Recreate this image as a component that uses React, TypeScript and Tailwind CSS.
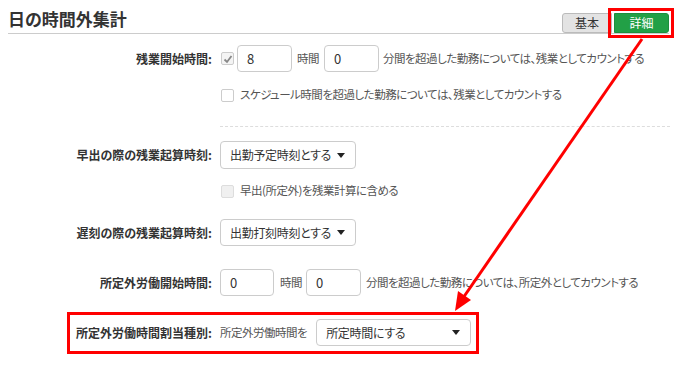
import React from "react";

const font = "font-['Noto_Sans_CJK_JP','Noto_Sans',sans-serif] [font-feature-settings:'palt']";
const body = "text-[11.5px] tracking-[-0.5px] text-[#555] whitespace-nowrap";

function Label({ children }: { children: React.ReactNode }) {
  return (
    <div className="w-[213px] shrink-0 text-right text-[12px] font-bold text-[#333] pr-[1px] whitespace-nowrap">
      {children}
    </div>
  );
}

function TextBox({ value, w = "w-[55px]" }: { value: string; w?: string }) {
  return (
    <div className={`${w} h-[27px] shrink-0 border border-[#ccc] rounded-[4px] bg-white flex items-center pl-[9px] text-[13px] tracking-normal text-[#333]`}>
      {value}
    </div>
  );
}

function Select({ value, w }: { value: string; w: string }) {
  return (
    <div className={`${w} shrink-0 border border-[#ccc] rounded-[4px] bg-white flex items-center justify-between pl-[9px] pr-[10px] text-[12px] tracking-[-0.3px] text-[#333] whitespace-nowrap`}>
      <span>{value}</span>
      <svg width="8" height="5" viewBox="0 0 8 5" className="shrink-0">
        <polygon points="0,0 8,0 4,5" fill="#222" />
      </svg>
    </div>
  );
}

function Check({ checked = false, disabled = false }: { checked?: boolean; disabled?: boolean }) {
  return (
    <div
      className={`w-[13px] h-[13px] shrink-0 border rounded-[2px] flex items-center justify-center ${
        disabled ? "border-[#ddd] bg-[#f0f0f0]" : checked ? "border-[#ccc] bg-[#f4f4f4]" : "border-[#ccc] bg-white"
      }`}
    >
      {checked && (
        <svg width="10" height="10" viewBox="0 0 10 10">
          <path d="M1.5 5.5 L4 8 L8.5 2" stroke="#888" strokeWidth="1.8" fill="none" />
        </svg>
      )}
    </div>
  );
}

export default function App() {
  return (
    <div className={`relative w-[685px] h-[365px] bg-white overflow-hidden ${font}`}>
      {/* header */}
      <div className="ml-2 w-[661px] h-[34px] border-b border-[#ccc] flex items-end justify-between">
        <div className="text-[17px] font-bold text-[#333] leading-none pb-[6px]">日の時間外集計</div>
        <div className="flex">
          <div className="w-[50px] h-[20px] bg-[#e3e3e3] border border-[#bbb] rounded-l-[3px] text-[12px] text-[#333] flex items-center justify-center">
            基本
          </div>
          <div className="w-[55px] h-[20px] ml-[2px] bg-[#22a046] border border-[#1c8f3d] rounded-r-[3px] text-[12px] text-white flex items-center justify-center">
            詳細
          </div>
        </div>
      </div>

      {/* row 1 */}
      <div className="mt-[11px] flex items-center h-[27px]">
        <Label>残業開始時間:</Label>
        <div className={`ml-[8px] flex items-center ${body}`}>
          <Check checked />
          <div className="ml-[3px]">
            <TextBox value="8" />
          </div>
          <span className="ml-[5px]">時間</span>
          <div className="ml-[5px]">
            <TextBox value="0" />
          </div>
          <span className="ml-[4px]">分間を超過した勤務については、残業としてカウントする</span>
        </div>
      </div>

      {/* row 2 */}
      <div className={`mt-[13px] h-[20px] flex items-center pl-[221px] ${body}`}>
        <Check />
        <span className="ml-[6px]">スケジュール時間を超過した勤務については、残業としてカウントする</span>
      </div>

      <div className="mt-[21px] ml-[220px] w-[450px] border-t border-dashed border-[#ddd]" />

      {/* row 3 */}
      <div className="mt-[14px] flex items-center h-[28px]">
        <Label>早出の際の残業起算時刻:</Label>
        <div className="ml-[7px]">
          <Select value="出勤予定時刻とする" w="w-[136px] h-[28px]" />
        </div>
      </div>

      {/* row 4 */}
      <div className={`mt-[12px] h-[20px] flex items-center pl-[221px] ${body}`}>
        <Check disabled />
        <span className="ml-[6px]">早出(所定外)を残業計算に含める</span>
      </div>

      {/* row 5 */}
      <div className="mt-[18px] flex items-center h-[27px]">
        <Label>遅刻の際の残業起算時刻:</Label>
        <div className="ml-[7px]">
          <Select value="出勤打刻時刻とする" w="w-[136px] h-[27px]" />
        </div>
      </div>

      {/* row 6 */}
      <div className="mt-[23px] flex items-center h-[27px]">
        <Label>所定外労働開始時間:</Label>
        <div className={`ml-[7px] flex items-center ${body}`}>
          <TextBox value="0" w="w-[54px]" />
          <span className="ml-[6px]">時間</span>
          <div className="ml-[4px]">
            <TextBox value="0" />
          </div>
          <span className="ml-[5px]">分間を超過した勤務については、所定外としてカウントする</span>
        </div>
      </div>

      {/* row 7 */}
      <div className="relative mt-[23px] flex items-center h-[27px]">
        <Label>所定外労働時間割当種別:</Label>
        <div className={`ml-[7px] flex items-center ${body}`}>
          <span>所定外労働時間を</span>
          <div className="ml-[9px]">
            <Select value="所定時間にする" w="w-[155px] h-[27px]" />
          </div>
        </div>
        <div className="absolute left-[67px] top-[-7px] w-[412px] h-[42px] border-[3px] border-[#ff0000]" />
      </div>

      {/* annotation: box around 詳細 and arrow */}
      <div className="absolute left-[608px] top-[8px] w-[66px] h-[30px] border-[3px] border-[#ff0000]" />
      <svg className="absolute left-0 top-0 pointer-events-none" width="685" height="365">
        <line x1="642" y1="39" x2="463" y2="298" stroke="#ff0000" strokeWidth="3" />
        <polygon points="455,311 471,300 458,291" fill="#ff0000" />
      </svg>
    </div>
  );
}
